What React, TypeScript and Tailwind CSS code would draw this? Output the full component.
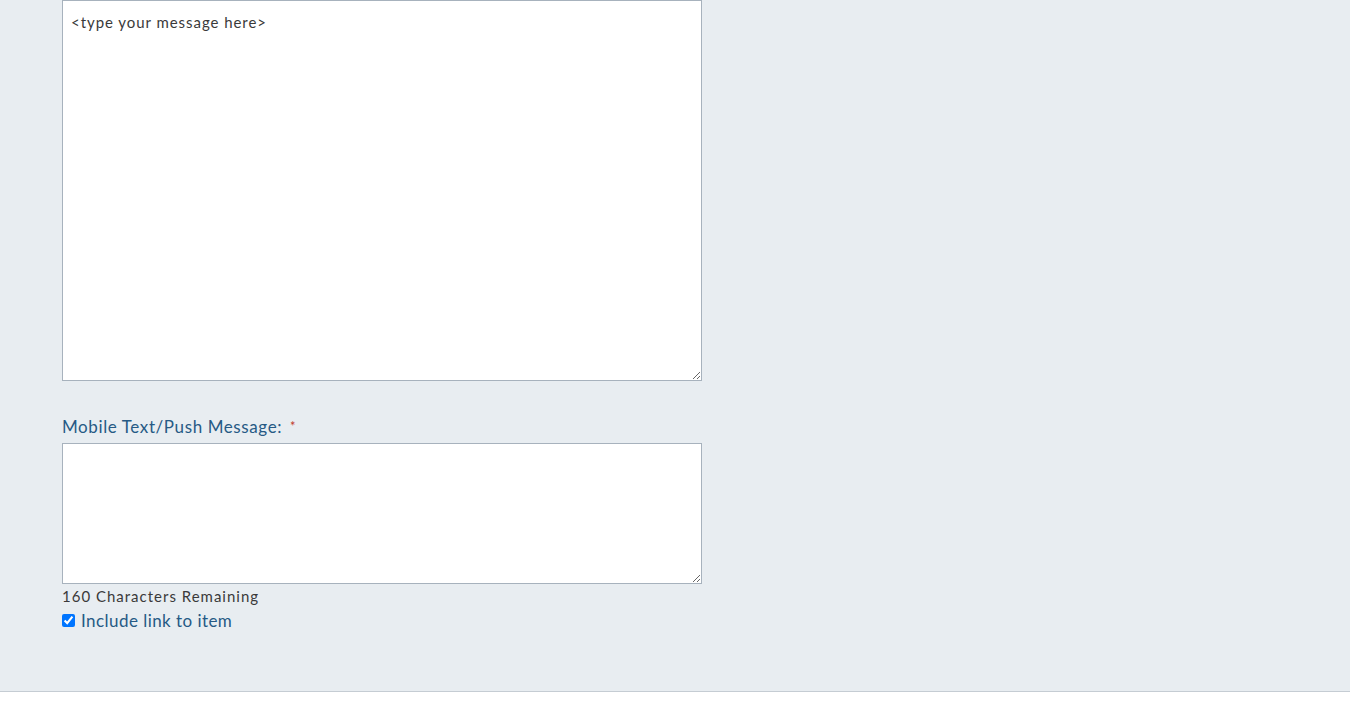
import React from "react"

export default function App() {
  return (
    <div className="min-h-[702px] bg-white font-['Lato',sans-serif]">
      <div className="bg-[#e8edf1] border-b border-[#c5ccd3] h-[692px] pl-[62px]">
        <textarea
          defaultValue="<type your message here>"
          className="block w-[640px] h-[381px] bg-white border border-[#a7b2bd] px-2 pt-[11px] pb-2 text-[15px] leading-[20px] tracking-[0.95px] text-[#3a3a3a] outline-none font-['Lato',sans-serif]"
        />
        <div className="mt-[35px] flex items-center h-[22px] text-[17px] tracking-[0.6px] text-[#265a85]">
          <span>Mobile Text/Push Message:</span>
          <span className="ml-[8px] text-[#c0392b] text-[13px]">*</span>
        </div>
        <textarea className="block mt-[5px] w-[640px] h-[141px] bg-white border border-[#a7b2bd] px-2 py-2 text-[15px] text-[#333] outline-none" />
        <div className="mt-[2px] text-[15px] leading-[20px] tracking-[1px] text-[#3a3a3a]">160 Characters Remaining</div>
        <label className="mt-[4px] flex items-center gap-[6px] text-[17px] leading-[22px] tracking-[0.45px] text-[#265a85]">
          <input type="checkbox" defaultChecked className="m-0 -mt-[2px] w-[13px] h-[13px] accent-[#0075ff]" />
          <span>Include link to item</span>
        </label>
      </div>
    </div>
  )
}
